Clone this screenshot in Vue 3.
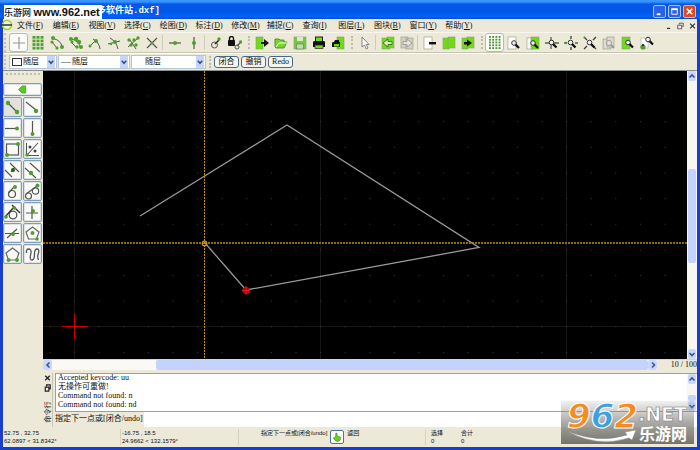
<script setup>
import { ref } from 'vue'

const menus = [
  ['文件', 'F'], ['编辑', 'E'], ['视图', 'V'], ['选择', 'C'], ['绘图', 'D'], ['标注', 'D'], ['修改', 'M'],
  ['捕捉', 'C'], ['查询', 'I'], ['图层', 'L'], ['图块', 'B'], ['窗口', 'Y'], ['帮助', 'Y'],
]

const dot = (x, y, r = 1.7) => `<circle cx="${x}" cy="${y}" r="${r}" fill="#4da02c"/>`
const ln = (d, w = 1, c = '#555') => `<path d="${d}" fill="none" stroke="${c}" stroke-width="${w}"/>`
const page = (x, y, w, h, c = '#6fdc12') => `<rect x="${x}" y="${y}" width="${w}" height="${h}" fill="${c}" stroke="#8a9a80" stroke-width=".6"/>`
const glass = (x, y) => `<circle cx="${x}" cy="${y}" r="2.3" fill="#eef" stroke="#333"/><path d="M${x + 1.6} ${y + 1.6}L${x + 5} ${y + 5}" stroke="#111" stroke-width="2.2"/>`

let squares = ''
for (let r = 0; r < 4; r++) for (let c = 0; c < 3; c++) squares += `<rect x="${1.5 + c * 4}" y="${r * 3.6}" width="3" height="2.7" fill="#4da02c"/>`
let beads = ''
for (let r = 0; r < 5; r++) for (let c = 0; c < 4; c++) beads += `<rect x="${1 + c * 3.2}" y="${r * 2.8}" width="1.9" height="1.8" fill="#4a9430"/>`

const icons = {
  free: ln('M1 7H13M7 1V13', 1.2, '#999'),
  grid: squares,
  ends: ln('M3 2.5Q11 4 12 11M2 6L7 12', 1) + dot(3, 2, 2) + dot(12, 11, 2) + dot(2, 6, 1.6) + dot(7, 12, 1.6),
  onEntity: ln('M2 3Q9 4 12 12M2 6L7 11', 1) + dot(2, 3, 2) + dot(7, 3, 2.2) + dot(10, 6, 2.2) + dot(12, 11, 2) + dot(3, 6, 1.5) + dot(8, 11, 1.7),
  center: ln('M5 3Q11 6 12 13M1 11L8 4', 1) + dot(8, 5, 2) + dot(2, 10, 1.5),
  middle: ln('M3 2Q9 5 11 13M1 8L13 5', 1) + dot(8, 6, 2) + dot(4, 8, 1.2),
  dist: ln('M2 11L12 2M4 4L10 13', 1) + dot(3, 4) + dot(8, 4) + dot(12, 2) + dot(5, 9) + dot(10, 9),
  cross: ln('M2 2L12 12M12 2L2 12', 1.2) + dot(7, 7, 1.4),
  horiz: ln('M1 7H13', 1.2) + dot(7, 7, 2),
  vert: ln('M7 1V13', 1.2) + dot(7, 7, 2),
  relzero: '<circle cx="5.5" cy="9" r="3" fill="none" stroke="#555"/>' + ln('M6 8L10 4', 1.4, '#222') + dot(10, 3),
  lockzero: '<rect x="0" y="4" width="7" height="6" rx="1" fill="#111"/><path d="M1.5 5V2.5A2 2 0 0 1 5.5 2.5V5" fill="none" stroke="#111" stroke-width="1.4"/><circle cx="9" cy="11" r="2" fill="none" stroke="#555"/>' + ln('M9 10L12 7', 1.2) + dot(12.5, 6),
  newf: page(1, 1, 7, 12) + '<path d="M6 6H9V3L14 7L9 11V8H6Z" fill="#111"/>',
  open: '<path d="M1 11V3H5L6 4H10V6H13L10 12H2Z" fill="#72d925" stroke="#457a20" stroke-width=".8"/><path d="M2 11L5 7H13" fill="none" stroke="#fff"/>',
  save: page(1, 1, 12, 12, '#75c93e') + '<rect x="4" y="1" width="6" height="4" fill="#d8eccb"/><rect x="3.5" y="8" width="7" height="5" fill="#bde0a5" stroke="#5c7c48" stroke-width=".6"/>',
  print: '<rect x="3.5" y="1" width="7" height="5" fill="#6fdc12" stroke="#222"/><path d="M1 6Q1 5 3 5H11Q13 5 13 6V11H1Z" fill="#111"/><rect x="3" y="9" width="8" height="3.5" fill="#6fdc12" stroke="#222" stroke-width=".7"/>',
  preview: page(6, 1, 7, 12) + '<path d="M1 7Q1 6 3 6L4 4H8V6H9V11H1Z" fill="#111"/><rect x="3" y="8" width="5" height="2.5" fill="#6fdc12"/>',
  pointer: '<path d="M4 1V11L6.5 9L8.3 13L10 12L8.2 8.5H11Z" fill="#fff" stroke="#777" stroke-width=".9"/>',
  undo: page(1, 2, 8, 11) + page(6, 1, 7, 11) + '<path d="M2 7L7 3V5.5H11V8.5H7V11Z" fill="#d6eecb" stroke="#3c6b25" stroke-width=".9"/>',
  redo: page(1, 1, 7, 11, '#d4d0c4') + page(6, 2, 7, 11, '#d4d0c4') + '<path d="M12 7L7 3V5.5H3V8.5H7V11Z" fill="#e8e5da" stroke="#999" stroke-width=".9"/>',
  cut: page(1, 1, 8, 12, '#fff') + '<rect x="6" y="6" width="7" height="2.4" fill="#111"/>',
  copy: page(1, 2, 6, 11) + page(6, 1, 7, 11),
  paste: page(1, 2, 6, 11) + page(6, 1, 7, 11) + '<path d="M3 6H6V3.5L11 7L6 10.5V8.5H3Z" fill="#111"/>',
  beads,
  redraw: page(1, 1, 8, 12, '#fff') + glass(7, 7),
  zoomAuto: page(1, 2, 7, 11, '#fff') + page(5, 1, 8, 12) + glass(7, 7),
  zoomIn: ln('M0 7H14M6 1V13', 1.3, '#4b6b3d') + glass(6.5, 6.5),
  zoomOut: ln('M0 7H3M11 7H14M7 0V3M7 11V14', 1.6, '#4b6b3d') + dot(2, 7, 1.3) + glass(6.5, 6.5),
  zoomPan: ln('M1 1L4 4M13 1L10 4M1 13L4 10M13 13L10 10', 1.4, '#444') + dot(1.5, 1.5, 1) + glass(6.5, 6.5),
  zoomPrev: page(1, 3, 8, 10, '#dcd9cd') + page(5, 1, 7, 10, '#dcd9cd') + '<circle cx="7" cy="7" r="2.5" fill="#e8e5da" stroke="#999"/><path d="M9 9L12 12" stroke="#999" stroke-width="2"/>',
  zoomWin: page(1, 1, 8, 12) + glass(7, 6.5),
  zoomHand: '<rect x="1" y="2" width="7" height="10" fill="#fff" stroke="#aaa" stroke-width=".6"/>' + glass(8, 3.5) + dot(3, 11, 2.6) + ln('M3 8V10', 1.5, '#111'),
}

const groups = [
  { cls: 'g0', items: ['free', 'grid', 'ends', 'onEntity', 'center', 'middle', 'dist', 'cross'] },
  { cls: 'line4', items: ['horiz', 'vert'] },
  { cls: 'line3', items: ['relzero', 'lockzero'] },
  { cls: 'grip', items: ['newf', 'open', 'save', 'print', 'preview'] },
  { cls: 'grip', items: ['pointer'] },
  { cls: 'line4', items: ['undo', 'redo'] },
  { cls: 'line4', items: ['cut', 'copy', 'paste'] },
  { cls: 'grip', items: ['beads', 'redraw', 'zoomAuto', 'zoomIn', 'zoomOut', 'zoomPan', 'zoomPrev', 'zoomWin', 'zoomHand'] },
]
const active = ref(['free', 'beads'])

const ring = (x, y, r, w = 1.2) => `<circle cx="${x}" cy="${y}" r="${r}" fill="none" stroke="#555" stroke-width="${w}"/>`
const pentagon = '<path d="M8.5 2L15 7L12.5 14H4.5L2 7Z" fill="none" stroke="#666" stroke-width="1.2"/>'
const tools = [
  ['两点直线', ln('M4 4L13 13', 1.3) + dot(4, 4, 2.2) + dot(13, 13, 2.2)],
  ['角度直线', ln('M2 3L12 11', 1.3) + dot(12, 12, 2.2)],
  ['水平线', ln('M1 8.5H13', 1.2) + dot(13, 8.5, 2)],
  ['垂直线', ln('M8.5 1V13', 1.2) + dot(8.5, 14, 2)],
  ['矩形', '<rect x="2.5" y="3" width="12" height="11" fill="none" stroke="#555" stroke-width="1.2"/>' + dot(14, 3, 2) + dot(3, 14, 2)],
  ['角平分线', ln('M2.5 2V14.5H15M3 14L14 2', 1.1) + '<circle cx="6" cy="6" r="1.5" fill="#444"/><circle cx="11" cy="10" r="1.5" fill="#444"/>' + dot(3, 14, 1.8)],
  ['平行线', ln('M1 8L8 15M6 1L15 10M7 10L11 5', 1.1) + '<circle cx="9" cy="8" r="2" fill="#2d5a20"/>'],
  ['过点平行线', ln('M1 6L12 16M6 1L16 10', 1.1) + dot(7, 11, 2.2)],
  ['切线', ring(8, 11, 3.5) + ln('M4.5 10L10 4', 1.2) + dot(11, 4, 2)],
  ['双圆切线', ring(4.5, 13, 3) + ring(11.5, 8, 3.2) + ln('M2 11L13 3', 1.2) + dot(13.5, 2.5, 2)],
  ['垂直切线', ring(9, 11, 3.8, 1.3) + ln('M1 13L10 3M8 1L16 9', 1.4, '#333') + dot(2, 13, 1.8) + dot(10.5, 4, 1.8)],
  ['正交线', ln('M8 2V15M2 9H14', 1.2) + dot(9, 7, 2)],
  ['相对角度线', ln('M1 8.5H15M3 13L13 4', 1.2) + dot(9, 9, 2)],
  ['中心多边形', pentagon + dot(8.5, 8, 2) + dot(13, 14, 1.8)],
  ['边长多边形', pentagon + dot(4.5, 14, 2) + dot(13, 14, 2)],
  ['手绘线', ln('M2.5 7Q2 3 4.500 3Q7.500 3 7 7Q5 14 8 14Q10.500 14 10.500 8Q10.500 3 13 3Q15.500 3 14.500 7Q13 11 14.500 14', 1.3)],
]

const dots = []
for (let i = 0; i < 26; i++) for (let j = 0; j < 11; j++) dots.push({ x: 7 + i * 24.6, y: 25 + j * 25.65 })

const layers = [
  { id: 'color', label: '颜色', cls: 'c1' },
  { id: 'width', label: '线宽', cls: 'c2' },
  { id: 'ltype', label: '线型', cls: 'c3' },
]
const actions = ['闭合', '撤销', 'Redo']
const log = ['Accepted keycode: uu', '无操作可重做!', 'Command not found: n', 'Command not found: nd']
const command = ref('')
</script>

<template>
  <div class="window">
    <header class="title">
      <span class="caption">多软件站.dxf]</span>
      <div class="winbtns">
        <button aria-label="最小化"><svg viewBox="0 0 12 12"><path d="M3 9H7" stroke="#fff" stroke-width="2" /></svg></button>
        <button aria-label="最大化"><svg viewBox="0 0 12 12"><path d="M3 3.500H9V9H3Z" fill="none" stroke="#fff" /><path d="M2.500 3.500H9.500" stroke="#fff" stroke-width="2" /></svg></button>
        <button class="close" aria-label="关闭"><svg viewBox="0 0 12 12"><path d="M3 3L9 9M9 3L3 9" stroke="#fff" stroke-width="1.800" /></svg></button>
      </div>
      <div class="site">乐游网 <b>www.962.net</b></div>
    </header>

    <nav class="menubar">
      <svg class="logo" viewBox="0 0 14 12"><circle cx="6" cy="6" r="4.500" fill="#f4f7dc" stroke="#8fd52a" stroke-width="1.500" /><path d="M0 6H11" stroke="#333" stroke-width="1.500" /></svg>
      <div class="menus">
        <button v-for="(m, i) in menus" :key="i">{{ m[0] }}(<u>{{ m[1] }}</u>)</button>
      </div>
      <div class="mdi">
        <button aria-label="最小化子窗口"><svg viewBox="0 0 10 10"><path d="M3 8H7" stroke="#333" stroke-width="1.500" /></svg></button>
        <button aria-label="还原子窗口"><svg viewBox="0 0 10 10"><path d="M3.500 3V1.500H8.500V5.500H7M1.500 4H6.500V8.500H1.500Z" fill="none" stroke="#444" /></svg></button>
        <button aria-label="关闭子窗口"><svg viewBox="0 0 10 10"><path d="M2 2L8 8M8 2L2 8" stroke="#333" stroke-width="1.500" /></svg></button>
      </div>
    </nav>

    <div class="toolbar">
      <div v-for="(g, i) in groups" :key="i" class="group" :class="g.cls">
        <button v-for="n in g.items" :key="n" :aria-label="n" :class="{ on: active.includes(n) }">
          <svg viewBox="0 0 14 14" v-html="icons[n]"></svg>
        </button>
      </div>
    </div>

    <div class="options">
      <div class="combos">
        <div v-for="l in layers" :key="l.id" class="combo" :class="l.cls">
          <span class="mark"></span>
          <select :id="l.id" :aria-label="l.label"><option>随层</option></select>
          <svg class="drop" viewBox="0 0 9 12"><path d="M2 4.500L4.500 7.500L7 4.500" fill="none" stroke="#33507f" stroke-width="1.700" /></svg>
        </div>
      </div>
      <div class="actions">
        <button v-for="a in actions" :key="a">{{ a }}</button>
      </div>
    </div>

    <main class="body">
      <aside class="palette">
        <div class="handle"></div>
        <button class="back" aria-label="返回"><svg viewBox="0 0 12 10"><path d="M1 5L5 1H9V9H5Z" fill="#55cc1c" stroke="#4a9a28" stroke-width=".8" /></svg></button>
        <div class="tools">
          <button v-for="(t, i) in tools" :key="i" :aria-label="t[0]" :class="{ on: i === 0 }">
            <svg viewBox="0 0 17 17" v-html="t[1]"></svg>
          </button>
        </div>
      </aside>

      <section class="work">
        <div class="view">
          <svg class="canvas" viewBox="0 0 644 288" preserveAspectRatio="xMinYMin slice">
            <rect width="644" height="288" fill="#000" />
            <path d="M31.500 0V288M277.500 0V288M523.500 0V288M0 255.500H644" stroke="#161616" fill="none" />
            <rect v-for="(d, i) in dots" :key="i" :x="d.x - 0.5" :y="d.y - 0.5" width="1" height="1" fill="#3a3a3a" />
            <path d="M97 145L244 54L436 176.500L203 219L162 172" fill="none" stroke="#999" stroke-width="1.300" />
            <path d="M161.500 0V288" stroke="#c08f10" stroke-dasharray="2 1" />
            <path d="M0 172H644" stroke="#c08f10" stroke-width="1.500" stroke-dasharray="2 1" />
            <circle cx="161.500" cy="172.500" r="2.300" fill="none" stroke="#c8960f" stroke-width="1.200" />
            <circle cx="203" cy="219.500" r="3" fill="#a00" stroke="#c00010" stroke-width="1.200" />
            <path d="M199 219.500H207M203 215V224" stroke="#e22" stroke-width=".8" />
            <path d="M19 255.500H45M31.500 243V268" stroke="#c00" stroke-width="1.200" />
          </svg>
          <div class="vscroll">
            <button class="arr" aria-label="向上滚动"><svg viewBox="0 0 8 8"><path d="M1.500 5.500L4 3L6.500 5.500" /></svg></button>
            <div class="track"><i class="s1"></i><i class="thumb"></i><i class="s2"></i></div>
            <button class="arr" aria-label="向下滚动"><svg viewBox="0 0 8 8"><path d="M1.500 3L4 5.500L6.500 3" /></svg></button>
          </div>
        </div>
        <div class="hrow">
          <div class="hscroll">
            <button class="arr" aria-label="向左滚动"><svg viewBox="0 0 8 8"><path d="M5.500 1.500L3 4L5.500 6.500" /></svg></button>
            <div class="track"><i class="s1"></i><i class="thumb"></i></div>
            <button class="arr" aria-label="向右滚动"><svg viewBox="0 0 8 8"><path d="M3 1.500L5.500 4L3 6.500" /></svg></button>
          </div>
          <span class="scale">10 / 100</span>
        </div>
        <div class="dock">
          <div class="strip">
            <button aria-label="关闭命令行"><svg viewBox="0 0 10 10"><path d="M2.500 2.500L7.500 7.500M7.500 2.500L2.500 7.500" stroke="#222" stroke-width="1.500" /></svg></button>
            <button aria-label="浮动命令行"><svg viewBox="0 0 10 10"><path d="M4 3V1.500H8V6H7M2.500 4H6.500V8.500H2.500Z" fill="none" stroke="#222" stroke-width="1.300" /></svg></button>
            <svg class="side" viewBox="0 0 10 26"><text x="-25" y="8" transform="rotate(-90)">命令行</text></svg>
          </div>
          <div class="console">
            <div class="logrow">
              <div class="log"><p v-for="(t, i) in log" :key="i">{{ t }}</p></div>
              <div class="vscroll">
                <button class="arr" aria-label="日志向上"><svg viewBox="0 0 8 8"><path d="M1.500 5.500L4 3L6.500 5.500" /></svg></button>
                <div class="track"><i class="s1"></i><i class="thumb small"></i></div>
                <button class="arr" aria-label="日志向下"><svg viewBox="0 0 8 8"><path d="M1.500 3L4 5.500L6.500 3" /></svg></button>
              </div>
            </div>
            <div class="prompt">
              <label for="cmd">指定下一点或[闭合/undo]</label>
              <input id="cmd" v-model="command" type="text">
            </div>
          </div>
        </div>
      </section>
    </main>

    <footer class="status">
      <div class="coord"><span>52.75 , 32.75</span><span>62.0897 &lt; 31.8342°</span></div>
      <div class="coord"><span>-16.75 , 18.5</span><span>24.9662 &lt; 132.1579°</span></div>
      <div class="hint">
        <span>指定下一点或[闭合/undo]</span>
        <button aria-label="鼠标提示"><svg viewBox="0 0 12 12"><path d="M4.500 6V1.500H6V5L10 6V9L8.500 11H4.500L1.500 7L3 6.500Z" fill="#66d51c" stroke="#3c8d18" stroke-width=".8" /></svg></button>
        <span>返回</span>
      </div>
      <div class="count"><span>选择</span><span>0</span></div>
      <div class="count last"><span>合计</span><span>0</span></div>
    </footer>

    <div class="brand">
      <svg viewBox="0 0 133 43">
        <defs>
          <linearGradient id="bg" x1="0" y1="0" x2="0" y2="1">
            <stop offset="0" stop-color="#8a8a86" stop-opacity=".12" />
            <stop offset=".5" stop-color="#858580" stop-opacity=".7" />
            <stop offset="1" stop-color="#74746b" />
          </linearGradient>
        </defs>
        <rect width="133" height="43" fill="url(#bg)" />
        <text class="num" x="6" y="27"><tspan class="or">9</tspan><tspan class="bl">6</tspan><tspan class="or">2</tspan></text>
        <text class="net" x="77" y="20">.NET</text>
        <text class="cn" x="78" y="39">乐游网</text>
        <path d="M6 30Q38 43 66 34L64 31L75 29L71 39L68 37Q36 47 6 30Z" fill="#fff" stroke="#888" stroke-width=".5" />
      </svg>
    </div>
  </div>
</template>

<style>
body {
  margin: 0;
}
</style>

<style scoped>
.window {
  position: relative;
  box-sizing: border-box;
  min-height: 100vh;
  display: flex;
  flex-direction: column;
  border: solid #173fcb;
  border-width: 0 3px 3px;
  background: #ece9d8;
  color: #111;
  font-family: "Liberation Serif", "Noto Sans CJK SC", serif;
  font-size: 8px;
  line-height: 10px;
}
button {
  padding: 0;
  margin: 0;
  border: 0;
  background: none;
  color: inherit;
  font: inherit;
  display: flex;
  align-items: center;
  justify-content: center;
}
svg {
  display: block;
}
.title {
  display: flex;
  align-items: center;
  justify-content: space-between;
  height: 19px;
  margin: 0 -3px;
  padding: 0 4px 0 97px;
  background: linear-gradient(#3d97ff 0, #3590fb 2px, #0659e8 4px, #0057e6 12px, #0064f8 17px, #0048c8);
}
.caption {
  color: #fff;
  font-family: "Liberation Mono", "Noto Sans CJK SC", monospace;
  font-size: 9px;
  font-weight: bold;
  padding-top: 2px;
}
.winbtns {
  display: flex;
  gap: 2px;
  padding-top: 3px;
}
.winbtns button {
  width: 13px;
  height: 13px;
  box-sizing: border-box;
  border: 1px solid #a9c4fa;
  border-radius: 2px;
  background: #2c62e4;
}
.winbtns .close {
  background: #dc4a20;
}
.winbtns svg {
  width: 11px;
  height: 11px;
}
.site {
  position: absolute;
  left: 1px;
  top: 5px;
  width: 98px;
  height: 14px;
  box-sizing: border-box;
  background: #fff;
  color: #111;
  font-family: "Liberation Sans", "Noto Sans CJK SC", sans-serif;
  font-size: 9px;
  font-weight: 500;
  line-height: 14px;
  white-space: nowrap;
}
.site b {
  font-size: 11px;
  font-weight: bold;
}
.menubar {
  display: flex;
  height: 13px;
}
.logo {
  width: 14px;
  height: 12px;
  margin-left: -2px;
}
.menus {
  flex: 0 1 464px;
  display: grid;
  grid-template-columns: repeat(13, 1fr);
  padding-left: 2px;
}
.menus button {
  justify-content: flex-start;
  white-space: nowrap;
}
.mdi {
  margin-left: auto;
  display: flex;
  gap: 3px;
  align-items: center;
}
.mdi svg {
  width: 9px;
  height: 8px;
}
.toolbar {
  display: flex;
  height: 21px;
  align-items: center;
  border-top: 1px solid #f8f6ee;
  border-bottom: 1px solid #c9c5b5;
  box-sizing: border-box;
}
.group {
  display: flex;
}
.group button {
  width: 19px;
  height: 19px;
  box-sizing: border-box;
  border-radius: 3px;
}
.group svg {
  width: 14px;
  height: 14px;
}
.group .on {
  background: #fbfbf8;
  border: 1px solid #a9bccb;
}
.g0 {
  padding-left: 3px;
  margin-left: 1px;
  border-left: 2px dotted #c6c2b0;
}
.line4::before,
.line3::before {
  content: "";
  width: 1px;
  margin: 2px 2px 2px 1px;
  background: #cfcbbb;
}
.line3::before {
  margin-right: 1px;
}
.grip::before {
  content: "";
  width: 2px;
  margin: 3px 2px 3px 4px;
  border-left: 2px dotted #c0bcaa;
  box-sizing: border-box;
}
.options {
  display: flex;
  height: 18px;
  box-sizing: border-box;
  border-top: 1px solid #fff;
  border-bottom: 1px solid #8a8f90;
  align-items: center;
}
.combos {
  display: flex;
  gap: 1px;
  padding-left: 3px;
  margin-left: 1px;
  border-left: 2px dotted #c6c2b0;
}
.combo {
  display: flex;
  align-items: center;
  box-sizing: border-box;
  height: 14px;
  padding: 0 1px 0 2px;
  background: #fff;
  border: 1px solid #b8c6d2;
}
.c1 {
  width: 48px;
}
.c2 {
  width: 72px;
}
.c3 {
  width: 75px;
}
.mark {
  flex: none;
  box-sizing: border-box;
  width: 10px;
  margin-right: 1px;
}
.c1 .mark {
  height: 8px;
  border: 1px solid #333;
}
.c2 .mark {
  border-top: 1px solid #999;
}
.combo select {
  flex: 1;
  min-width: 0;
  appearance: none;
  border: 0;
  padding: 0;
  background: none;
  color: #111;
  font: inherit;
}
.drop {
  flex: none;
  width: 8px;
  height: 12px;
  background: #c5d5fb;
}
.actions {
  display: flex;
  gap: 2px;
  margin-left: 3px;
  padding-left: 3px;
  border-left: 2px dotted #c0bcaa;
}
.actions button {
  width: 25px;
  height: 12px;
  box-sizing: border-box;
  border: 1px solid #46688a;
  border-radius: 3px;
  background: #f6f5ef;
}
.body {
  flex: 1;
  display: flex;
  min-height: 0;
}
.palette {
  width: 40px;
  flex: none;
}
.handle {
  height: 2px;
  margin: 2px 3px 8px;
  border-top: 2px dotted #c4c0ae;
  box-sizing: border-box;
}
.palette button {
  box-sizing: border-box;
  border: 1px solid #7f9db9;
  border-radius: 2px;
  background: #fbfaf7;
  box-shadow: inset 0 0 0 1px #dbe4ea;
}
.palette .back {
  width: 39px;
  height: 13px;
}
.back svg {
  width: 12px;
  height: 9px;
}
.tools {
  margin-top: 1px;
  display: grid;
  grid-template-columns: 19px 19px;
  grid-auto-rows: 20px;
  gap: 1px 1px;
}
.palette .tools .on {
  background: #e4e1da;
}
.tools svg {
  width: 17px;
  height: 17px;
}
.work {
  flex: 1;
  min-width: 0;
  display: flex;
  flex-direction: column;
}
.view {
  flex: 1;
  display: flex;
  min-height: 0;
}
.canvas {
  flex: 1;
  min-width: 0;
  height: auto;
  min-height: 100%;
  background: #000;
}
.vscroll {
  width: 10px;
  flex: none;
  box-sizing: border-box;
  padding: 0 1px;
  display: flex;
  flex-direction: column;
  background: #f7f6f1;
}
.arr {
  flex: none;
  width: 9px;
  height: 10px;
  border-radius: 2px;
  background: #c8d7fb;
}
.vscroll .arr {
  width: 8px;
}
.arr svg {
  width: 8px;
  height: 8px;
}
.arr path {
  fill: none;
  stroke: #3b5686;
  stroke-width: 1.6;
}
.track {
  flex: 1;
  display: flex;
  flex-direction: inherit;
}
.thumb {
  flex: 94;
  border-radius: 2px;
  background: #c3d3fd;
}
.vscroll .s1 {
  flex: 88;
}
.vscroll .s2 {
  flex: 86;
}
.hrow {
  display: flex;
  height: 11px;
  border-top: 1px solid #d8d5c8;
  box-sizing: border-box;
}
.hscroll {
  flex: 1;
  display: flex;
  background: #faf9f6;
}
.hscroll .s1 {
  flex: 103;
}
.hscroll .thumb {
  flex: 490;
}
.scale {
  width: 40px;
  text-align: right;
  line-height: 9px;
  white-space: nowrap;
}
.dock {
  display: flex;
  height: 57px;
  padding-top: 3px;
  box-sizing: border-box;
}
.strip {
  width: 10px;
  margin-right: 2px;
  flex: none;
  border-right: 1px solid #c9c5b5;
  box-sizing: border-box;
}
.strip svg {
  width: 9px;
  height: 10px;
}
.strip .side {
  height: 26px;
  margin-top: 6px;
}
.side text {
  font-size: 8px;
  fill: #222;
}
.console {
  flex: 1;
  display: flex;
  flex-direction: column;
  min-width: 0;
}
.logrow {
  height: 39px;
  display: flex;
  background: #fff;
  border: 1px solid #8fa3b0;
  border-right: 0;
  box-sizing: border-box;
}
.log {
  flex: 1;
  display: flex;
  flex-direction: column;
  justify-content: flex-end;
  overflow: hidden;
  padding: 0 2px 2px;
}
.log p {
  margin: 0;
  flex: none;
  height: 9px;
  line-height: 9px;
}
.logrow .s1 {
  flex: 10;
}
.logrow .small {
  flex: 6;
}
.prompt {
  flex: 1;
  display: flex;
}
.prompt label {
  width: 89px;
  line-height: 14px;
  white-space: nowrap;
}
.prompt input {
  flex: 1;
  min-width: 0;
  border: 0;
  padding: 0 2px;
  background: #fff;
  font: inherit;
}
.status {
  display: flex;
  height: 20px;
  font-family: "Liberation Sans", "Noto Sans CJK SC", sans-serif;
  font-size: 6px;
  line-height: 8px;
  padding: 2px 0;
  box-sizing: border-box;
  white-space: nowrap;
}
.coord {
  width: 118px;
  box-sizing: border-box;
  display: flex;
  flex-direction: column;
  padding-left: 1px;
  border-right: 1px solid #d5d1c1;
}
.hint {
  width: 187px;
  box-sizing: border-box;
  display: flex;
  gap: 3px;
  padding-left: 22px;
  border-right: 1px solid #d5d1c1;
}
.hint button {
  width: 14px;
  height: 14px;
  margin-top: 1px;
  border: 1px solid #4f7396;
  border-radius: 2px;
  background: #fff;
  box-sizing: border-box;
}
.hint svg {
  width: 10px;
  height: 10px;
}
.count {
  width: 30px;
  box-sizing: border-box;
  display: flex;
  flex-direction: column;
  padding-left: 5px;
}
.brand {
  position: absolute;
  right: 3px;
  bottom: 3px;
  width: 133px;
  height: 43px;
}
.brand svg {
  overflow: visible;
}
.num {
  font: italic bold 34px "DejaVu Sans", sans-serif;
  stroke: #fff;
  stroke-width: 1px;
}
.or {
  fill: #f68b1f;
}
.bl {
  fill: #3f9fe0;
}
.net {
  font: bold 19px "DejaVu Sans", sans-serif;
  fill: #fff;
  stroke: #777;
  stroke-width: 0.6px;
}
.cn {
  font: bold 16px "Noto Sans CJK SC", sans-serif;
  fill: #fff;
}
</style>
